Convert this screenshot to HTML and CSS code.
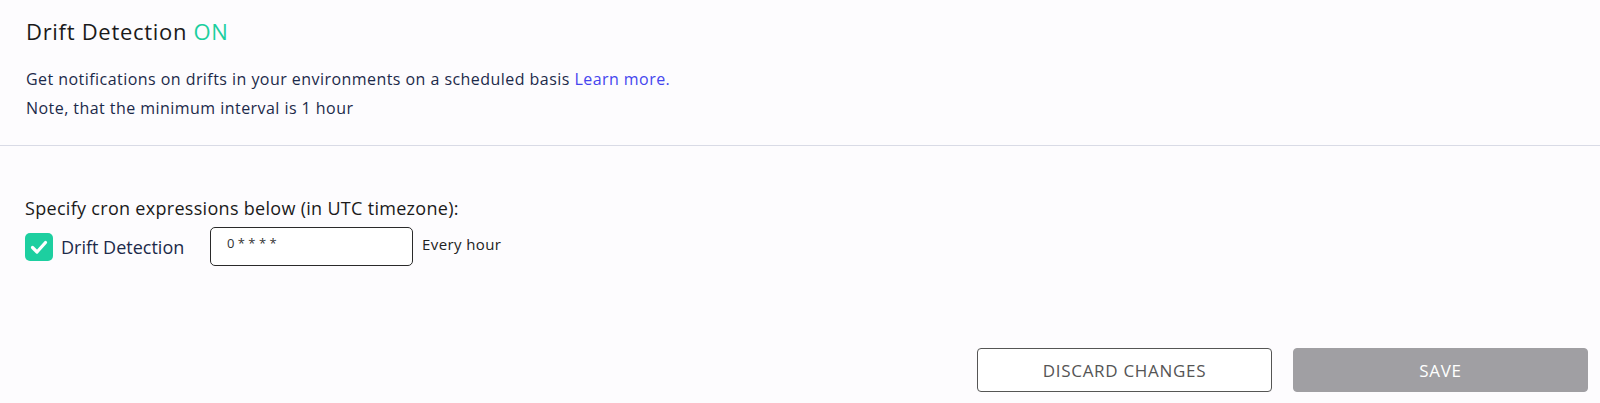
FILE: index.html
```html
<!DOCTYPE html>
<html lang="en">
<head>
  <meta charset="UTF-8">
  <title>Drift Detection</title>
  <link rel="stylesheet" href="styles.css">
</head>
<body>
  <div class="header">
    <h2 class="title">Drift Detection <span class="status-on">ON</span></h2>
    <p class="desc">Get notifications on drifts in your environments on a scheduled basis <a href="#" class="learn-more">Learn more.</a></p>
    <p class="desc">Note, that the minimum interval is 1 hour</p>
  </div>

  <div class="settings">
    <div class="cron-label">Specify cron expressions below (in UTC timezone):</div>
    <div class="cron-row">
      <label class="check-label">
        <span class="checkbox">
          <svg width="20" height="20" viewBox="0 0 20 20"><path d="M3.5 10.5 L8 15 L16.5 5.5" fill="none" stroke="#fff" stroke-width="3.2" stroke-linecap="round" stroke-linejoin="round"/></svg>
        </span>
        Drift Detection
      </label>
      <input class="cron-input" type="text" value="0 * * * *">
      <span class="cron-hint">Every hour</span>
    </div>
  </div>

  <div class="actions">
    <button class="btn btn-discard">DISCARD CHANGES</button>
    <button class="btn btn-save" disabled>SAVE</button>
  </div>
</body>
</html>
```

FILE: styles.css
```css
body {
  margin: 0;
  background: #fdfcfe;
  font-family: "Open Sans", Lato, sans-serif;
  color: #1c2a4a;
}

.header {
  padding: 17px 26px 22px;
  border-bottom: 1px solid #d9dbe6;
}

.title {
  margin: 0 0 20px;
  font-size: 22px;
  font-weight: 400;
  letter-spacing: 0.7px;
  line-height: 28px;
  color: #1a1a1a;
}

.status-on {
  color: #1ccf9f;
}

.desc {
  margin: 0;
  font-size: 16px;
  letter-spacing: 0.45px;
  line-height: 29px;
}

.learn-more {
  color: #4545ee;
  text-decoration: none;
}

.settings {
  padding: 51px 25px 0;
}

.cron-label {
  font-size: 18px;
  letter-spacing: 0.3px;
  line-height: 22px;
  color: #1a1a1a;
}

.cron-row {
  display: flex;
  align-items: center;
  margin-top: 8px;
}

.check-label {
  display: flex;
  align-items: center;
  gap: 8px;
  font-size: 18px;
  color: #1c2a4a;
  width: 185px;
}

.checkbox {
  display: flex;
  align-items: center;
  justify-content: center;
  width: 28px;
  height: 28px;
  border-radius: 5px;
  background: #1dcfa0;
}

.cron-input {
  box-sizing: border-box;
  width: 203px;
  height: 39px;
  padding: 0 16px 8px;
  border: 1.5px solid #2a2a2a;
  border-radius: 5px;
  background: #fff;
  font-family: "Open Sans", sans-serif;
  font-size: 13px;
  color: #333;
  outline: none;
}

.cron-hint {
  margin-left: 9px;
  margin-bottom: 6px;
  font-size: 15px;
  letter-spacing: 0.4px;
  color: #222;
}

.actions {
  display: flex;
  justify-content: flex-end;
  gap: 21px;
  padding: 0 12px;
  margin-top: 82px;
}

.btn {
  width: 295px;
  height: 44px;
  border-radius: 4px;
  font-family: "Open Sans", sans-serif;
  font-size: 17px;
  letter-spacing: 0.7px;
  cursor: pointer;
}

.btn-discard {
  background: #fff;
  border: 1px solid #555;
  color: #555;
}

.btn-save {
  background: #a09fa3;
  border: 1px solid #a09fa3;
  color: #fff;
}
```
